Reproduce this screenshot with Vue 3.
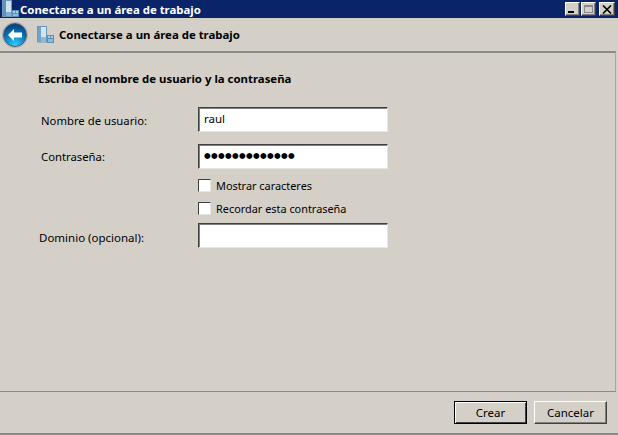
<template>
  <div class="window">
    <div class="titlebar">
      <svg class="app-icon" width="18" height="18" viewBox="0 0 18 18">
        <rect x="1" y="0" width="10" height="17" fill="#6f97b8" />
        <rect x="2" y="1" width="3" height="15" fill="#5d93bd" />
        <rect x="5" y="1" width="5" height="11" fill="#cfe2f0" />
        <rect x="5" y="12" width="5" height="4" fill="#7fb0d4" />
        <rect x="11" y="10" width="7" height="7" fill="#5b8fb6" />
        <rect x="12" y="11" width="2" height="2" fill="#a9cde6" />
        <rect x="15" y="11" width="2" height="2" fill="#a9cde6" />
        <rect x="12" y="14" width="5" height="2" fill="#8dbad9" />
      </svg>
      <span class="titlebar__text">Conectarse a un área de trabajo</span>
      <div class="caption-btns">
        <button class="caption-btn"><span class="glyph-min" /></button>
        <button class="caption-btn"><span class="glyph-max" /></button>
        <button class="caption-btn caption-btn--close">
          <svg width="10" height="9" viewBox="0 0 10 9"><path d="M1 0.5l8 8M9 0.5l-8 8" stroke="#000" stroke-width="1.6" /></svg>
        </button>
      </div>
    </div>

    <div class="wizard-head">
      <div class="back-btn">
        <svg width="22" height="22" viewBox="0 0 22 22">
          <path d="M4 11l6-6v3.5h8v5h-8V17z" fill="#fff" />
        </svg>
      </div>
      <svg class="head-icon" width="17" height="17" viewBox="0 0 17 17">
        <rect x="0" y="0" width="10" height="16.5" fill="#6f97b8" />
        <rect x="1" y="1" width="3" height="15" fill="#6fa3cc" />
        <rect x="4" y="1" width="5" height="10" fill="#d3e5f2" />
        <rect x="4" y="11" width="5" height="5" fill="#8dbad9" />
        <rect x="10" y="9" width="7" height="8" fill="#5b8fb6" />
        <rect x="11" y="10" width="2" height="2" fill="#a9cde6" />
        <rect x="14" y="10" width="2" height="2" fill="#a9cde6" />
        <rect x="11" y="13" width="5" height="3" fill="#8dbad9" />
      </svg>
      <span class="wizard-head__text">Conectarse a un área de trabajo</span>
    </div>

    <div class="panel">
      <h1 class="panel__title">Escriba el nombre de usuario y la contraseña</h1>
      <div class="form">
        <label class="form__label form__label--first">Nombre de usuario:</label>
        <div class="field">raul</div>
        <label class="form__label">Contraseña:</label>
        <div class="field field--pass">●●●●●●●●●●●●●</div>
        <div class="checks">
          <div class="check"><span class="check__box" />Mostrar caracteres</div>
          <div class="check"><span class="check__box" />Recordar esta contraseña</div>
        </div>
        <label class="form__label form__label--domain">Dominio (opcional):</label>
        <div class="field"></div>
      </div>
    </div>

    <div class="footer">
      <button class="btn btn--default">Crear</button>
      <button class="btn">Cancelar</button>
    </div>
  </div>
</template>

<script setup>
</script>

<style>
html, body { margin: 0; overflow: hidden; }
</style>

<style scoped>
.window {
  width: 618px;
  height: 435px;
  box-sizing: border-box;
  display: flex;
  flex-direction: column;
  background: #d4d0c8;
  border-bottom: 2px solid #8c8a84;
  font-family: "Noto Sans", sans-serif;
  font-size: 12px;
  color: #000;
}

.titlebar {
  height: 18px;
  flex: none;
  display: flex;
  align-items: center;
  padding-left: 1px;
  background: #0a246a;
  color: #fff;
}
.app-icon { flex: none; }
.titlebar__text {
  margin-left: 1px;
  font-weight: 700;
  font-size: 11.4px;
}
.caption-btns {
  margin-left: auto;
  margin-right: 3px;
  display: flex;
  gap: 1px;
}
.caption-btn {
  width: 15px;
  height: 14px;
  padding: 0;
  box-sizing: border-box;
  display: flex;
  align-items: center;
  justify-content: center;
  background: #d4d0c8;
  border: 1px solid;
  border-color: #fff #404040 #404040 #fff;
  box-shadow: inset -1px -1px 0 #808080;
}
.caption-btn--close {
  width: 16px;
  margin-left: 2px;
}
.glyph-min {
  width: 6px;
  height: 2px;
  background: #000;
  margin: 6px 3px 0 0;
}
.glyph-max {
  box-sizing: border-box;
  width: 9px;
  height: 8px;
  border: 1px solid #8a8a8a;
  border-top-width: 2px;
}

.wizard-head {
  height: 33px;
  flex: none;
  display: flex;
  align-items: center;
  padding-left: 2px;
  box-sizing: border-box;
}
.back-btn {
  width: 22px;
  height: 22px;
  display: flex;
  border-radius: 50%;
  border: 1px solid #4a5a68;
  background: radial-gradient(circle at 50% 95%, #2fd0fa 0%, #0b7cc0 48%, #06407f 85%);
  box-shadow: 0 0 0 1px #aab2b8;
  margin-left: 1px;
}
.head-icon {
  flex: none;
  margin-left: 10px;
}
.wizard-head__text {
  margin-left: 5px;
  font-weight: 700;
  font-size: 11.4px;
}

.panel {
  flex: 1;
  box-sizing: border-box;
  padding: 17px 0 0 38px;
  margin-right: 2px;
  border-top: 2px solid #8c8a84;
  border-right: 1px solid #a8a59e;
  border-bottom: 1px solid #8c8a84;
}
.panel__title {
  margin: 0;
  font-size: 11.4px;
  line-height: 17px;
  font-weight: 700;
}

.form {
  margin-top: 20px;
  display: grid;
  grid-template-columns: 160px 190px;
  row-gap: 12px;
  align-items: center;
}
.form__label {
  padding-left: 3px;
  font-size: 11.3px;
}
.form__label--first {
  padding-top: 2px;
}
.form__label--domain {
  padding: 4px 0 0 1px;
  font-size: 11.5px;
}
.field {
  box-sizing: border-box;
  height: 25px;
  padding: 0 0 3px 5px;
  display: flex;
  align-items: center;
  background: #fff;
  border: 1px solid;
  border-color: #404040 #e8e6e0 #e8e6e0 #404040;
  box-shadow: inset 1px 1px 0 #808080;
  font-size: 11.5px;
}
.field--pass {
  font-family: "DejaVu Sans", sans-serif;
  font-size: 7.7px;
  letter-spacing: 0.3px;
}
.checks {
  grid-column: 2;
  display: flex;
  flex-direction: column;
  gap: 10px;
  margin: -2px 0 -4px;
}
.check {
  display: flex;
  align-items: center;
  height: 13px;
  gap: 5px;
  font-size: 10.9px;
}
.check__box {
  box-sizing: border-box;
  width: 13px;
  height: 13px;
  background: #fff;
  border: 1px solid;
  border-color: #404040 #e8e6e0 #e8e6e0 #404040;
}

.footer {
  height: 41px;
  flex: none;
  box-sizing: border-box;
  display: flex;
  justify-content: flex-end;
  align-items: center;
  gap: 7px;
  padding: 0 11px 0 0;
}
.btn {
  width: 73px;
  height: 23px;
  padding: 0;
  box-sizing: border-box;
  background: #d4d0c8;
  border: 1px solid;
  border-color: #fff #404040 #404040 #fff;
  box-shadow: inset -1px -1px 0 #808080;
  font-family: inherit;
  font-size: 11.5px;
  color: #000;
}
.btn--default {
  border-color: #000;
  box-shadow: inset 1px 1px 0 #fff, inset -1px -1px 0 #404040;
}
</style>
